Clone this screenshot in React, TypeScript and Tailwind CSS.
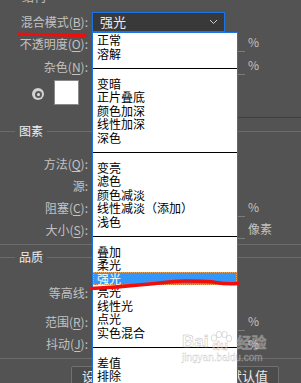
import React from "react";

const LABEL = "text-[12px] leading-[14px] text-[#c2c2c2]";

function Key({ children }: { children: React.ReactNode }) {
  return <span className="underline underline-offset-2">{children}</span>;
}

function Row({
  h,
  label,
  unit,
  tick,
}: {
  h: string;
  label?: React.ReactNode;
  unit?: string;
  tick?: boolean;
}) {
  return (
    <div className={`flex items-center ${h}`}>
      <div className={`w-[88px] text-right ${LABEL}`}>{label}</div>
      <div className="w-[149px]" />
      <div className="flex flex-col">
        {unit && <span className={`pl-[11px] ${LABEL}`}>{unit}</span>}
        {tick && <div className="mt-[2px] h-px w-[8px] bg-[#7c7c7c]" />}
      </div>
    </div>
  );
}

function Header({ title }: { title: string }) {
  return (
    <div className="flex items-center">
      <div className="h-px w-[15px] bg-[#6c6c6c]" />
      <span className="px-[4px] text-[12px] leading-[14px] text-[#ececec]">{title}</span>
      <div className="h-px flex-1 bg-[#6c6c6c]" />
    </div>
  );
}

const groups: string[][] = [
  ["正常", "溶解"],
  ["变暗", "正片叠底", "颜色加深", "线性加深", "深色"],
  ["变亮", "滤色", "颜色减淡", "线性减淡（添加）", "浅色"],
  ["叠加", "柔光", "强光", "亮光", "线性光", "点光", "实色混合"],
  ["差值", "排除"],
];

export default function App() {
  return (
    <div className="relative h-[383px] w-[301px] overflow-hidden bg-[#535353] font-['Noto_Sans_CJK_SC','Noto_Sans',sans-serif]">
      {/* cut-off section title */}
      <div className="h-[12px] overflow-hidden">
        <div className={`-mt-[10px] pl-[22px] ${LABEL}`}>结构</div>
      </div>

      {/* blend mode select */}
      <div className="flex h-[20px] items-center">
        <div className={`w-[88px] text-right ${LABEL}`}>
          混合模式(<Key>B</Key>):
        </div>
        <div className="ml-[4px] flex h-[20px] w-[133px] items-center justify-between border border-[#1b74e4] bg-[#393939] pl-[7px] pr-[6px]">
          <span className="text-[13px] leading-[14px] text-[#ededed]">强光</span>
          <svg width="9" height="6" viewBox="0 0 9 6">
            <polyline points="1,1 4.5,4.5 8,1" fill="none" stroke="#cfcfcf" strokeWidth="1" />
          </svg>
        </div>
      </div>

      <Row h="h-[23px]" label={<>不透明度(<Key>O</Key>):</>} unit="%" tick />
      <Row h="h-[23px]" label={<>杂色(<Key>N</Key>):</>} unit="%" tick />

      {/* colour swatch */}
      <div className="flex h-[39px] items-start pt-[2px]">
        <div className="ml-[32px] mt-[8px] flex h-[12px] w-[12px] items-center justify-center rounded-full bg-[#d2d2d2]">
          <div className="flex h-[7px] w-[7px] items-center justify-center rounded-full bg-[#5a5a5a]">
            <div className="h-[3px] w-[3px] rounded-full bg-[#e0e0e0]" />
          </div>
        </div>
        <div className="ml-[10px] h-[25px] w-[25px] border border-[#8a8a8a] bg-white" />
      </div>

      <div className="ml-[237px] h-px bg-[#404040]" />

      {/* 图素 */}
      <div className="mt-[6px] h-[29px]">
        <Header title="图素" />
      </div>
      <Row h="h-[22px]" label={<>方法(<Key>Q</Key>):</>} />
      <Row h="h-[22px]" label="源:" />
      <Row h="h-[22px]" label={<>阻塞(<Key>C</Key>):</>} unit="%" tick />
      <Row h="h-[22px]" label={<>大小(<Key>S</Key>):</>} unit="像素" tick />

      <div className="mt-[3px] h-px bg-[#6c6c6c]" />

      {/* 品质 */}
      <div className="mt-[5px] h-[32px]">
        <Header title="品质" />
      </div>
      <Row h="h-[22px]" label="等高线:" />
      <div className="h-[7px]" />
      <Row h="h-[22px]" label={<>范围(<Key>R</Key>):</>} unit="%" tick />
      <Row h="h-[22px]" label={<>抖动(<Key>J</Key>):</>} unit="%" />

      <div className="mt-[3px] h-px bg-[#6c6c6c]" />

      {/* bottom buttons */}
      <div className="mt-[7px] flex justify-end gap-[8px] pr-[22px]">
        <div className="flex h-[20px] w-[100px] items-center justify-center rounded-[2px] border border-[#707070] bg-[#4c4c4c] text-[13px] text-[#e8e8e8]">
          设置为默认值
        </div>
        <div className="flex h-[20px] w-[100px] items-center justify-center rounded-[2px] border border-[#707070] bg-[#4c4c4c] text-[13px] text-[#e8e8e8]">
          复位为默认值
        </div>
      </div>

      {/* open blend-mode list */}
      <div className="absolute left-[92px] top-[32px] h-[360px] w-[146px] border-x border-t border-[#1b74e4] bg-white">
        {groups.map((g, gi) => (
          <div key={gi}>
            {gi > 0 && <div className="mb-[7.5px] mt-[8px] h-px bg-black" />}
            {g.map((item) => (
              <div
                key={item}
                className={
                  item === "强光"
                    ? "h-[13.5px] border border-dotted border-[#e8a35c] bg-[#3496f8] pl-[3px] text-[12px] leading-[11.5px] text-white"
                    : "h-[13.5px] pl-[4px] text-[12px] leading-[13.5px] text-black"
                }
              >
                {item}
              </div>
            ))}
          </div>
        ))}
      </div>

      {/* watermark */}
      <div className="pointer-events-none absolute left-[182px] top-[331px] flex flex-col items-start opacity-70">
        <div className="flex items-end">
          <span className="font-['Liberation_Sans',sans-serif] text-[17px] font-bold leading-[17px] text-white/50 [-webkit-text-stroke:0.5px_#a8a8a8]">
            Bai
          </span>
          <svg width="26" height="20" viewBox="0 0 26 20" className="-mb-[1px]">
            <g fill="rgba(255,255,255,0.45)" stroke="#a8a8a8" strokeWidth="0.6">
              <ellipse cx="6" cy="7" rx="2.6" ry="3.4" />
              <ellipse cx="11" cy="3.5" rx="2.6" ry="3.2" />
              <ellipse cx="16.5" cy="3.5" rx="2.6" ry="3.2" />
              <ellipse cx="21" cy="7.5" rx="2.6" ry="3.4" />
            </g>
            <text x="4" y="19" fontSize="13" fontWeight="bold" fontFamily="Liberation Sans" fill="rgba(255,255,255,0.5)" stroke="#a8a8a8" strokeWidth="0.5">
              du
            </text>
          </svg>
          <span className="ml-[2px] text-[15px] font-bold leading-[17px] text-white/50 [-webkit-text-stroke:0.5px_#a8a8a8]">
            经验
          </span>
        </div>
        <span className="mt-[3px] font-['Liberation_Sans',sans-serif] text-[10px] leading-[10px] text-white/50 [-webkit-text-stroke:0.3px_#a8a8a8]">
          jingyan.baidu.com
        </span>
      </div>

      {/* red annotation strokes */}
      <svg className="pointer-events-none absolute left-0 top-0" width="301" height="383" viewBox="0 0 301 383">
        <path d="M19 34 C40 34.5 65 35.5 85 35.5" fill="none" stroke="#f20d0d" strokeWidth="3" strokeLinecap="round" />
        <path
          d="M91 288.5 C115 287.5 135 285.5 150 284 C165 282.5 172 281 185 281 C200 281 210 281 216 282.5 C224 284 232 284 238 283.5"
          fill="none"
          stroke="#f20d0d"
          strokeWidth="3.5"
          strokeLinecap="round"
        />
      </svg>
    </div>
  );
}
